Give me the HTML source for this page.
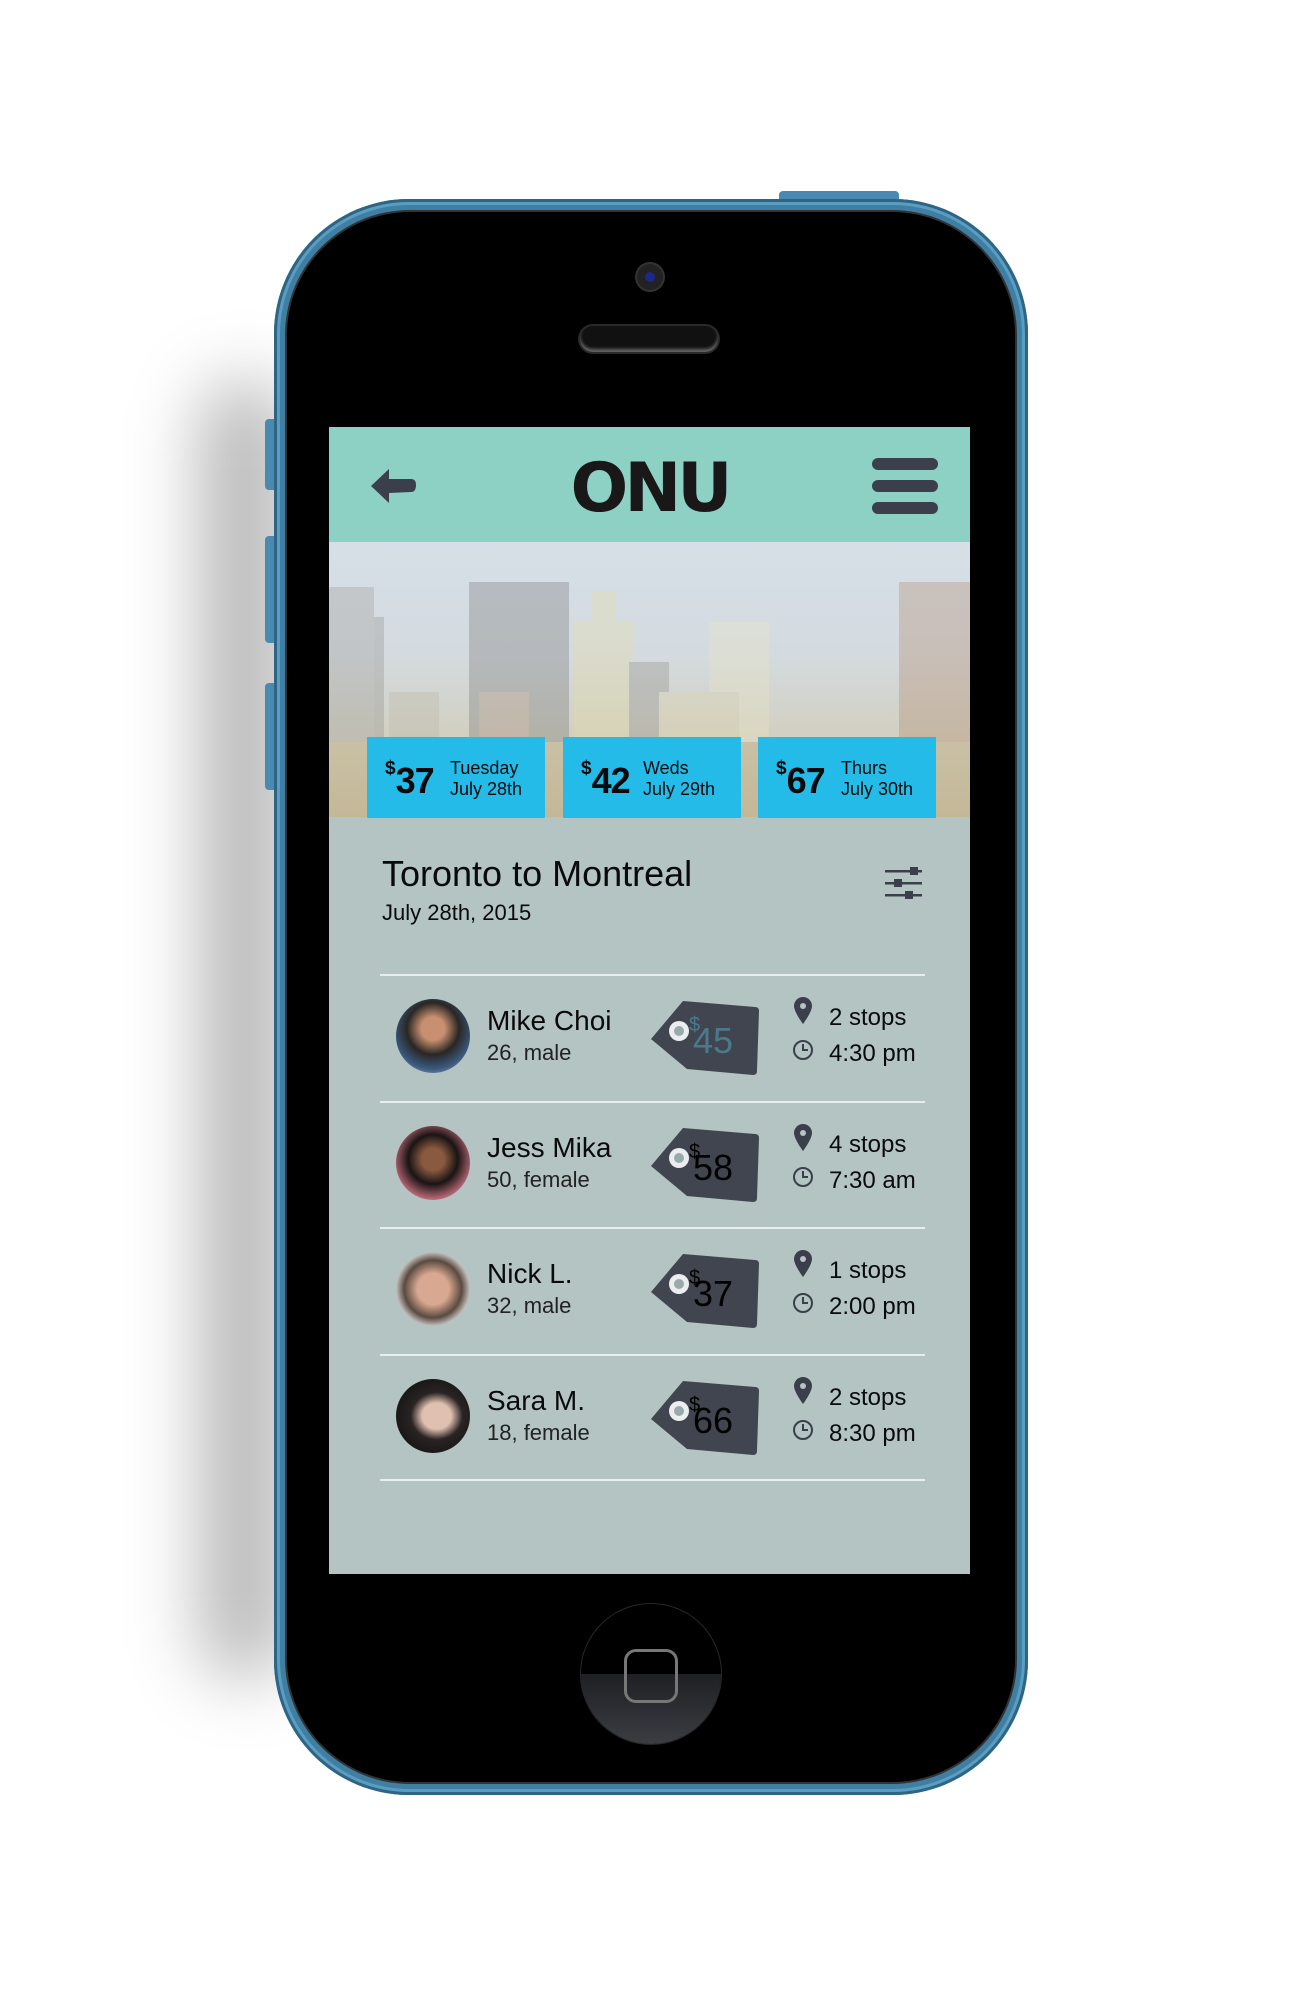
<!DOCTYPE html>
<html><head><meta charset="utf-8"><style>
*{margin:0;padding:0;box-sizing:border-box}
body{width:1306px;height:2011px;background:#fff;position:relative;overflow:hidden;font-family:"Liberation Sans",Arial,sans-serif}
.abs{position:absolute}
.shadow{left:200px;top:380px;width:90px;height:1300px;background:rgba(0,0,0,0.28);filter:blur(35px);border-radius:60px}
.phone{left:274px;top:199px;width:754px;height:1596px;border-radius:135px;background:#3f7fa3;box-shadow:inset 0 0 0 3px #2e6585,inset 0 0 0 6px #5a9dc0}
.black{left:287px;top:212px;width:728px;height:1570px;border-radius:123px;background:#000;box-shadow:0 0 0 2px #333}
.sb{background:#4a8ab0;border-radius:4px 0 0 4px;width:10px;left:265px}
.screen{left:329px;top:427px;width:641px;height:1147px;background:#b3c4c2;overflow:hidden}
.hdr{left:0;top:0;width:641px;height:115px;background:#8dd1c5}
.city{left:0;top:115px;width:641px;height:275px;background:linear-gradient(#d6dfe7,#d4dbe0 40%,#d0ccb8 80%,#c9c2a8)}
.bx{top:310px;width:178px;height:81px;background:#24bbe8;color:#0a0a0a}
.bx .p{position:absolute;left:18px;top:23px;font-size:36px;font-weight:bold;letter-spacing:-1px}
.bx .p sup{font-size:19px;vertical-align:top;position:relative;top:-2px;margin-right:1px}
.bx .d{position:absolute;left:83px;top:21px;font-size:18px;line-height:21px}
.div{left:51px;width:545px;height:2px;background:#e8eeed}
.name{font-size:28px;color:#0a0a0a}
.sub{font-size:22px;color:#222}
.info{font-size:24px;color:#0a0a0a}
</style></head><body>
<div class="abs shadow"></div>
<div class="abs" style="left:779px;top:191px;width:120px;height:12px;background:#4a8ab0;border-radius:4px 4px 0 0"></div>
<div class="abs sb" style="top:419px;height:71px"></div>
<div class="abs sb" style="top:536px;height:107px"></div>
<div class="abs sb" style="top:683px;height:107px"></div>
<div class="abs phone"></div>
<div class="abs black"></div>
<div class="abs" style="left:637px;top:264px;width:26px;height:26px;border-radius:50%;background:#222;box-shadow:0 0 0 2px #333"><div style="margin:8px;width:10px;height:10px;border-radius:50%;background:#1a2a8a"></div></div>
<div class="abs" style="left:580px;top:326px;width:138px;height:26px;border-radius:13px;background:#111;box-shadow:inset 0 -3px 3px #666,0 0 0 2px #2a2a2a"></div>
<div class="abs" style="left:581px;top:1604px;width:140px;height:140px;border-radius:50%;background:linear-gradient(#000 50%,#1e2024 50%,#3a3d42);box-shadow:0 0 0 1px #2a2a2a"></div>
<div class="abs" style="left:624px;top:1649px;width:54px;height:54px;border-radius:12px;border:3px solid #777"></div>

<div class="abs screen">
 <div class="abs hdr">
  <svg class="abs" style="left:40px;top:40px" width="48" height="38" viewBox="0 0 48 38"><path d="M2 19 L20 2 L20 12 L42 12 Q47 12 47 18 Q47 25 42 25 L20 26 L20 36 Z" fill="#3b3f4c"/></svg>
  <div class="abs" style="left:0;width:641px;top:22px;text-align:center;font-size:68px;font-weight:900;color:#1a1718;letter-spacing:-4px;font-family:'DejaVu Sans','Liberation Sans',sans-serif">ONU</div>
  <div class="abs" style="left:543px;top:31px;width:66px;height:12px;border-radius:6px;background:#3b3f4c"></div>
  <div class="abs" style="left:543px;top:53px;width:66px;height:12px;border-radius:6px;background:#3b3f4c"></div>
  <div class="abs" style="left:543px;top:75px;width:66px;height:12px;border-radius:6px;background:#3b3f4c"></div>
 </div>
 <div class="abs city">
  <svg width="641" height="275" class="abs" style="left:0;top:0">
   <g opacity="0.3">
   <rect x="0" y="45" width="45" height="230" fill="#9a9690"/>
   <rect x="45" y="75" width="10" height="200" fill="#8d8a86"/>
   <rect x="140" y="40" width="100" height="235" fill="#6f6e6e"/>
   <rect x="60" y="150" width="50" height="125" fill="#b8b4a4"/>
   <rect x="245" y="80" width="60" height="195" fill="#e8dca0"/>
   <rect x="262" y="50" width="25" height="40" fill="#e8dca0"/>
   <rect x="300" y="120" width="40" height="155" fill="#8a8784"/>
   <rect x="380" y="80" width="60" height="195" fill="#f0e8c0"/>
   <rect x="330" y="150" width="80" height="125" fill="#e0d4a8"/>
   <rect x="570" y="40" width="71" height="235" fill="#b08060"/>
   <rect x="0" y="200" width="641" height="75" fill="#b8a070"/>
   <rect x="150" y="150" width="50" height="80" fill="#a08070"/>
   </g>
  </svg>
 </div>
 <div class="abs bx" style="left:38px"><div class="p"><sup>$</sup>37</div><div class="d">Tuesday<br>July 28th</div></div>
 <div class="abs bx" style="left:234px"><div class="p"><sup>$</sup>42</div><div class="d" style="left:80px">Weds<br>July 29th</div></div>
 <div class="abs bx" style="left:429px"><div class="p"><sup>$</sup>67</div><div class="d" style="left:83px">Thurs<br>July 30th</div></div>

 <div class="abs" style="left:53px;top:426px;font-size:36px;color:#0a0a0a">Toronto to Montreal</div>
 <div class="abs" style="left:53px;top:473px;font-size:22px;color:#0a0a0a">July 28th, 2015</div>
 <svg class="abs" style="left:556px;top:439px" width="38" height="34" viewBox="0 0 38 34"><g fill="#3b3f4c"><rect x="0" y="4" width="37" height="2.5"/><rect x="25" y="1" width="8" height="8"/><rect x="0" y="16" width="37" height="2.5"/><rect x="9" y="13" width="8" height="8"/><rect x="0" y="28" width="37" height="2.5"/><rect x="20" y="25" width="8" height="8"/></g></svg>

 <div class="abs div" style="top:547px"></div>
 <div class="abs div" style="top:674px"></div>
 <div class="abs div" style="top:800px"></div>
 <div class="abs div" style="top:927px"></div>
 <div class="abs div" style="top:1052px"></div>

 <div class="abs" style="left:0;top:548px;width:641px;height:126px">
  <div class="abs" style="left:67px;top:24px;width:74px;height:74px;border-radius:50%;background:radial-gradient(circle at 50% 40%,#c89070 20%,#2a2624 45%,#3a5a80 70%,#ccc)"></div>
  <div class="abs name" style="left:158px;top:30px">Mike Choi</div>
  <div class="abs sub" style="left:158px;top:65px">26, male</div>
  <svg class="abs" style="left:320px;top:24px" width="112" height="78" viewBox="0 0 112 78"><path d="M34 2 L106 8 Q110 8 110 12 L108 72 Q108 76 104 76 L38 70 L2 40 Z" fill="#41454f"/><circle cx="30" cy="32" r="10" fill="#fff" opacity="0.9"/><circle cx="30" cy="32" r="5" fill="#9aa"/><text x="44" y="54" font-family="Liberation Sans" font-size="36" fill="#4a7a8a">45</text><text x="40" y="32" font-family="Liberation Sans" font-size="20" fill="#4a7a8a">$</text></svg>
  <svg class="abs" style="left:465px;top:22px" width="18" height="28" viewBox="0 0 18 28"><path d="M9 0 C4 0 0 4 0 9 C0 15 9 27 9 27 C9 27 18 15 18 9 C18 4 14 0 9 0 Z" fill="#3b3f4c"/><circle cx="9" cy="9" r="3" fill="#b3c4c2"/></svg>
  <svg class="abs" style="left:463px;top:64px" width="22" height="22" viewBox="0 0 22 22"><circle cx="11" cy="11" r="9" fill="none" stroke="#3b3f4c" stroke-width="2"/><path d="M11 5 V11 H16" fill="none" stroke="#3b3f4c" stroke-width="2"/></svg>
  <div class="abs info" style="left:500px;top:29px">2 stops</div>
  <div class="abs info" style="left:500px;top:65px">4:30 pm</div>
 </div>

 <div class="abs" style="left:0;top:675px;width:641px;height:126px">
  <div class="abs" style="left:67px;top:24px;width:74px;height:74px;border-radius:50%;background:radial-gradient(circle at 50% 45%,#8a5a40 20%,#1a1414 45%,#c87080 75%,#ddd)"></div>
  <div class="abs name" style="left:158px;top:30px">Jess Mika</div>
  <div class="abs sub" style="left:158px;top:65px">50, female</div>
  <svg class="abs" style="left:320px;top:24px" width="112" height="78" viewBox="0 0 112 78"><path d="M34 2 L106 8 Q110 8 110 12 L108 72 Q108 76 104 76 L38 70 L2 40 Z" fill="#41454f"/><circle cx="30" cy="32" r="10" fill="#fff" opacity="0.9"/><circle cx="30" cy="32" r="5" fill="#9aa"/><text x="44" y="54" font-family="Liberation Sans" font-size="36" fill="#000">58</text><text x="40" y="32" font-family="Liberation Sans" font-size="20" fill="#000">$</text></svg>
  <svg class="abs" style="left:465px;top:22px" width="18" height="28" viewBox="0 0 18 28"><path d="M9 0 C4 0 0 4 0 9 C0 15 9 27 9 27 C9 27 18 15 18 9 C18 4 14 0 9 0 Z" fill="#3b3f4c"/><circle cx="9" cy="9" r="3" fill="#b3c4c2"/></svg>
  <svg class="abs" style="left:463px;top:64px" width="22" height="22" viewBox="0 0 22 22"><circle cx="11" cy="11" r="9" fill="none" stroke="#3b3f4c" stroke-width="2"/><path d="M11 5 V11 H16" fill="none" stroke="#3b3f4c" stroke-width="2"/></svg>
  <div class="abs info" style="left:500px;top:29px">4 stops</div>
  <div class="abs info" style="left:500px;top:65px">7:30 am</div>
 </div>

 <div class="abs" style="left:0;top:801px;width:641px;height:126px">
  <div class="abs" style="left:67px;top:24px;width:74px;height:74px;border-radius:50%;background:radial-gradient(circle at 50% 50%,#d8a890 30%,#5a4a40 55%,#e0e0e0 75%)"></div>
  <div class="abs name" style="left:158px;top:30px">Nick L.</div>
  <div class="abs sub" style="left:158px;top:65px">32, male</div>
  <svg class="abs" style="left:320px;top:24px" width="112" height="78" viewBox="0 0 112 78"><path d="M34 2 L106 8 Q110 8 110 12 L108 72 Q108 76 104 76 L38 70 L2 40 Z" fill="#41454f"/><circle cx="30" cy="32" r="10" fill="#fff" opacity="0.9"/><circle cx="30" cy="32" r="5" fill="#9aa"/><text x="44" y="54" font-family="Liberation Sans" font-size="36" fill="#000">37</text><text x="40" y="32" font-family="Liberation Sans" font-size="20" fill="#000">$</text></svg>
  <svg class="abs" style="left:465px;top:22px" width="18" height="28" viewBox="0 0 18 28"><path d="M9 0 C4 0 0 4 0 9 C0 15 9 27 9 27 C9 27 18 15 18 9 C18 4 14 0 9 0 Z" fill="#3b3f4c"/><circle cx="9" cy="9" r="3" fill="#b3c4c2"/></svg>
  <svg class="abs" style="left:463px;top:64px" width="22" height="22" viewBox="0 0 22 22"><circle cx="11" cy="11" r="9" fill="none" stroke="#3b3f4c" stroke-width="2"/><path d="M11 5 V11 H16" fill="none" stroke="#3b3f4c" stroke-width="2"/></svg>
  <div class="abs info" style="left:500px;top:29px">1 stops</div>
  <div class="abs info" style="left:500px;top:65px">2:00 pm</div>
 </div>

 <div class="abs" style="left:0;top:928px;width:641px;height:126px">
  <div class="abs" style="left:67px;top:24px;width:74px;height:74px;border-radius:50%;background:radial-gradient(ellipse at 55% 50%,#e0c0b0 25%,#2a2424 45%,#1a1818 70%)"></div>
  <div class="abs name" style="left:158px;top:30px">Sara M.</div>
  <div class="abs sub" style="left:158px;top:65px">18, female</div>
  <svg class="abs" style="left:320px;top:24px" width="112" height="78" viewBox="0 0 112 78"><path d="M34 2 L106 8 Q110 8 110 12 L108 72 Q108 76 104 76 L38 70 L2 40 Z" fill="#41454f"/><circle cx="30" cy="32" r="10" fill="#fff" opacity="0.9"/><circle cx="30" cy="32" r="5" fill="#9aa"/><text x="44" y="54" font-family="Liberation Sans" font-size="36" fill="#000">66</text><text x="40" y="32" font-family="Liberation Sans" font-size="20" fill="#000">$</text></svg>
  <svg class="abs" style="left:465px;top:22px" width="18" height="28" viewBox="0 0 18 28"><path d="M9 0 C4 0 0 4 0 9 C0 15 9 27 9 27 C9 27 18 15 18 9 C18 4 14 0 9 0 Z" fill="#3b3f4c"/><circle cx="9" cy="9" r="3" fill="#b3c4c2"/></svg>
  <svg class="abs" style="left:463px;top:64px" width="22" height="22" viewBox="0 0 22 22"><circle cx="11" cy="11" r="9" fill="none" stroke="#3b3f4c" stroke-width="2"/><path d="M11 5 V11 H16" fill="none" stroke="#3b3f4c" stroke-width="2"/></svg>
  <div class="abs info" style="left:500px;top:29px">2 stops</div>
  <div class="abs info" style="left:500px;top:65px">8:30 pm</div>
 </div>
</div>
</body></html>
